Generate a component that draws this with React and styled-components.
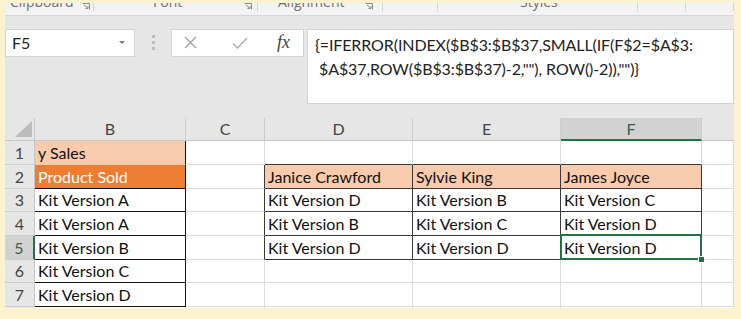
import React from 'react'
import styled, { createGlobalStyle } from 'styled-components'

const GlobalStyle = createGlobalStyle`
  html, body {
    margin: 0;
    padding: 0;
    background: #fbf2cf;
  }
  body {
    font-family: Lato, "Open Sans", sans-serif;
  }
`

const green = '#217346'
const dark = '#3a3a3a'
const grid = '#dcdcdc'

const colWidths = [30, 151, 79, 148, 148, 141, 32]
const rowHeights = [23, 24, 24, 23, 24, 24, 23, 24, 4]
const letters = ['', 'B', 'C', 'D', 'E', 'F', '']

// sheet content, row by row, columns B..(blank)
const sheet = [
  ['y Sales', '', '', '', '', ''],
  ['Product Sold', '', 'Janice Crawford', 'Sylvie King', 'James Joyce', ''],
  ['Kit Version A', '', 'Kit Version D', 'Kit Version B', 'Kit Version C', ''],
  ['Kit Version A', '', 'Kit Version B', 'Kit Version C', 'Kit Version D', ''],
  ['Kit Version B', '', 'Kit Version D', 'Kit Version D', 'Kit Version D', ''],
  ['Kit Version C', '', '', '', '', ''],
  ['Kit Version D', '', '', '', '', ''],
  ['', '', '', '', '', ''],
]

const groups = [
  { w: 89, label: 'Clipboard', lx: 5, launcher: 77 },
  { w: 164, label: 'Font', lx: 59, launcher: 150 },
  { w: 125, label: 'Alignment', lx: 20, launcher: 107 },
  { w: 55, label: '', lx: 0 },
  { w: 200, label: 'Styles', lx: 82 },
  { w: 48, label: '', lx: 0 },
  { w: 48, label: '', lx: 0 },
]

// per-cell look: fill, text colour and border colours
function cellLook(r, c) {
  const look = { fill: '#fff', color: '#111', right: grid, bottom: grid }
  if (c === 1 && r <= 6) {
    look.right = '#111'
    look.bottom = r === 0 ? '#f8cbad' : '#111'
    if (r === 0) look.fill = '#f8cbad'
    if (r === 1) { look.fill = '#ed7d31'; look.color = '#fff' }
  }
  if (c === 2 && r >= 1 && r <= 4) look.right = dark
  if (c >= 3 && c <= 5 && r === 0) look.bottom = dark
  if (c >= 3 && c <= 5 && r >= 1 && r <= 4) {
    look.right = dark
    look.bottom = dark
    if (r === 1) look.fill = '#f8cbad'
  }
  return look
}

const Frame = styled.div`
  box-sizing: border-box;
  width: 741px;
  height: 319px;
  padding: 3px 7px 11px 5px;
  display: flex;
  flex-direction: column;
  overflow: hidden;
`

const Ribbon = styled.div`
  display: flex;
  height: 12px;
  background: #f3f3f3;
  border-bottom: 1px solid #d6d6d6;
  overflow: hidden;
`

const Group = styled.div`
  position: relative;
  flex: 0 0 ${p => p.$w}px;
  box-sizing: border-box;
  border-right: 1px solid #d2d2d2;
  height: 8px;
`

const GroupLabel = styled.span`
  position: absolute;
  left: ${p => p.$x}px;
  top: -9px;
  font-family: "Open Sans", sans-serif;
  font-size: 14px;
  line-height: 16px;
  color: #6f6f6f;
  white-space: nowrap;
`

const Launcher = styled.svg`
  position: absolute;
  left: ${p => p.$x}px;
  top: 0;
`

const Toolbar = styled.div`
  display: flex;
  align-items: flex-start;
  background: #e6e6e6;
  padding: 13px 0 14px;
`

const NameBox = styled.div`
  box-sizing: border-box;
  width: 130px;
  height: 28px;
  background: #fff;
  border: 1px solid #d4d4d4;
  display: flex;
  align-items: center;
  justify-content: space-between;
  padding: 0 9px 0 6px;
  font-size: 16px;
  color: #222;
`

const Caret = styled.span`
  width: 0;
  height: 0;
  border-left: 3px solid transparent;
  border-right: 3px solid transparent;
  border-top: 3px solid #7a7a7a;
`

const Dots = styled.div`
  width: 36px;
  height: 28px;
  display: flex;
  flex-direction: column;
  align-items: center;
  justify-content: center;
  gap: 3px;
  span {
    width: 3px;
    height: 3px;
    background: #bdbdbd;
  }
`

const Buttons = styled.div`
  box-sizing: border-box;
  width: 133px;
  height: 28px;
  background: #fff;
  border: 1px solid #d4d4d4;
  display: flex;
  align-items: center;
  padding-left: 12px;
`

const IconSlot = styled.div`
  width: ${p => p.$w}px;
  display: flex;
  align-items: center;
`

const Fx = styled.span`
  font-family: "Liberation Serif", serif;
  font-style: italic;
  font-size: 18px;
  color: #444;
`

const FormulaBox = styled.div`
  box-sizing: border-box;
  flex: 1;
  margin-left: 3px;
  height: 75px;
  background: #fff;
  border: 1px solid #d4d4d4;
  padding: 3px 0 0 7px;
  font-size: 16px;
  letter-spacing: -0.1px;
  line-height: 24px;
  color: #222;
  white-space: pre;
`

const Sheet = styled.div`
  display: grid;
  grid-template-columns: ${colWidths.map(w => w + 'px').join(' ')};
  grid-template-rows: ${rowHeights.map(h => h + 'px').join(' ')};
  background: #fff;
  overflow: hidden;
`

const Corner = styled.div`
  position: relative;
  background: #e6e6e6;
  border-right: 1px solid #c6c6c6;
  border-bottom: 1px solid #c6c6c6;
`

const CornerMark = styled.svg`
  position: absolute;
  right: 2px;
  bottom: 3px;
`

const ColHead = styled.div`
  box-sizing: border-box;
  background: ${p => (p.$sel ? '#d2d2d2' : '#e6e6e6')};
  border-right: 1px solid ${p => (p.$last ? '#e6e6e6' : '#cdcdcd')};
  border-bottom: ${p => (p.$sel ? `2px solid ${green}` : '1px solid #c6c6c6')};
  display: flex;
  align-items: center;
  justify-content: center;
  font-size: 16px;
  color: ${p => (p.$sel ? '#3f5f4d' : '#444')};
`

const RowHead = styled.div`
  box-sizing: border-box;
  background: ${p => (p.$sel ? '#d2d2d2' : '#e6e6e6')};
  border-right: ${p => (p.$sel ? `2px solid ${green}` : '1px solid #c6c6c6')};
  border-bottom: 1px solid #cdcdcd;
  display: flex;
  align-items: center;
  justify-content: center;
  font-size: 16px;
  color: ${p => (p.$sel ? '#3f5f4d' : '#444')};
`

const Cell = styled.div`
  position: relative;
  box-sizing: border-box;
  background: ${p => p.$fill};
  color: ${p => p.$color};
  border-right: 1px solid ${p => p.$right};
  border-bottom: 1px solid ${p => p.$bottom};
  display: flex;
  align-items: center;
  padding-left: 3px;
  font-size: 16px;
  white-space: nowrap;
  overflow: visible;
  z-index: ${p => (p.$top ? 2 : 'auto')};
`

const Selection = styled.div`
  position: absolute;
  left: -1px;
  top: -2px;
  right: -1px;
  bottom: -1px;
  border: 2px solid ${green};
  pointer-events: none;
`

const Handle = styled.div`
  position: absolute;
  right: -5px;
  bottom: -5px;
  width: 5px;
  height: 5px;
  background: ${green};
  border: 1px solid #fff;
`

export default function App() {
  return (
    <>
      <GlobalStyle />
      <Frame>
        <Ribbon>
          {groups.map((g, i) => (
            <Group key={i} $w={g.w}>
              {g.label && <GroupLabel $x={g.lx}>{g.label}</GroupLabel>}
              {g.launcher && (
                <Launcher $x={g.launcher} width="8" height="7" viewBox="0 0 8 7">
                  <path d="M0.5 0.5 H7.5 V6.5 M2 2 L6 5.5 M6 3 V5.5 H3.5" stroke="#8a8a8a" fill="none" strokeWidth="1" />
                </Launcher>
              )}
            </Group>
          ))}
        </Ribbon>
        <Toolbar>
          <NameBox>
            F5
            <Caret />
          </NameBox>
          <Dots>
            <span />
            <span />
            <span />
          </Dots>
          <Buttons>
            <IconSlot $w={48}>
              <svg width="13" height="13" viewBox="0 0 13 13">
                <path d="M1 1 L12 12 M12 1 L1 12" stroke="#a0a0a0" strokeWidth="1.4" />
              </svg>
            </IconSlot>
            <IconSlot $w={45}>
              <svg width="16" height="12" viewBox="0 0 16 12">
                <path d="M1 6.5 L5.5 11 L15 1" stroke="#b2b2b2" strokeWidth="1.6" fill="none" />
              </svg>
            </IconSlot>
            <Fx>fx</Fx>
          </Buttons>
          <FormulaBox>
            {'{=IFERROR(INDEX($B$3:$B$37,SMALL(IF(F$2=$A$3:\n $A$37,ROW($B$3:$B$37)-2,""), ROW()-2)),"")}'}
          </FormulaBox>
        </Toolbar>
        <Sheet>
          <Corner>
            <CornerMark width="17" height="16" viewBox="0 0 17 16">
              <path d="M17 0 L17 16 L0 16 Z" fill="#bcbcbc" />
            </CornerMark>
          </Corner>
          {letters.slice(1).map((l, i) => (
            <ColHead key={i} $sel={l === 'F'} $last={i === letters.length - 2}>
              {l}
            </ColHead>
          ))}
          {sheet.map((row, r) => (
            <React.Fragment key={r}>
              <RowHead $sel={r === 4}>{r < 7 ? r + 1 : ''}</RowHead>
              {row.map((text, i) => {
                const c = i + 1
                const look = cellLook(r, c)
                const active = r === 4 && c === 5
                return (
                  <Cell
                    key={c}
                    $fill={look.fill}
                    $color={look.color}
                    $right={look.right}
                    $bottom={look.bottom}
                    $top={active}
                  >
                    {text}
                    {active && (
                      <Selection>
                        <Handle />
                      </Selection>
                    )}
                  </Cell>
                )
              })}
            </React.Fragment>
          ))}
        </Sheet>
      </Frame>
    </>
  )
}
